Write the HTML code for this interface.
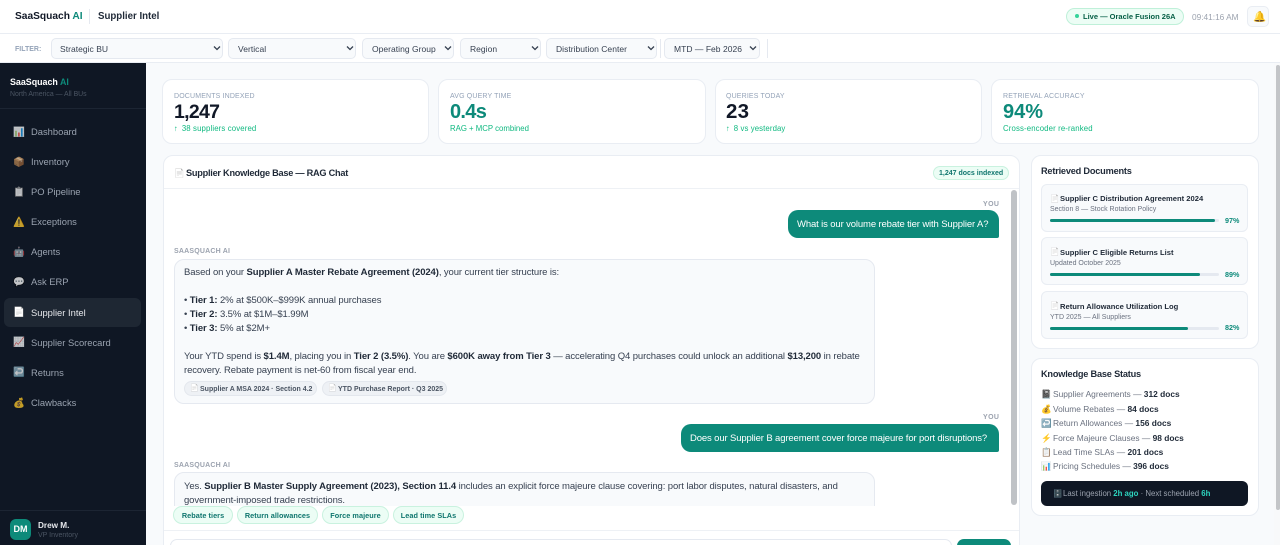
<!DOCTYPE html>
<html><head><meta charset="utf-8"><style>
*{box-sizing:border-box;margin:0;padding:0}
html,body{width:1280px;height:545px;overflow:hidden;background:#f8fafc}
body{position:relative;font-family:"Liberation Sans","Noto Sans CJK SC",sans-serif;color:#374151}
.b{position:absolute}
.t{position:absolute;height:0;line-height:0;white-space:nowrap}
b{font-weight:700;color:#1f2937}
.sel{position:absolute;top:38px;height:21px;background:#f8fafc;border:1px solid #e5e9f0;border-radius:5px}
.card{position:absolute;background:#fff;border:1px solid #e9edf3;border-radius:10px}
.st{font-size:8.5px;color:#374151;letter-spacing:.03px;top:48.5px}
.chev{position:absolute;top:45px;width:8px;height:6px}
.nav{font-size:9.4px;color:#9aa3b0;left:31px;margin-top:.4px}
.ic{position:absolute;height:0;line-height:0;font-size:11px;margin-top:1px}
.ni{font-size:9.5px;left:13px;opacity:.75}
.gr{filter:grayscale(1)}
.kl{font-size:7px;color:#94a3b8;letter-spacing:.15px;top:96.5px}
.kv{font-size:20px;font-weight:700;top:112px}
.ks{font-size:7.8px;color:#10b981;top:128.8px}
.m{font-size:9.5px;left:184px;letter-spacing:-.1px;color:#374151;margin-top:1.2px}
.who{font-size:7px;font-weight:700;color:#9ca3af;letter-spacing:.2px}
.chip{position:absolute;top:506px;height:18px;background:#ecfdf5;border:1px solid #c9f2df;border-radius:9px;font-size:7.3px;font-weight:700;color:#0f766e;line-height:17px;text-align:center;letter-spacing:.05px;white-space:nowrap}
.cite{position:absolute;top:381px;height:15px;background:#eef1f5;border:1px solid #e3e7ed;border-radius:8px}
.doc{position:absolute;left:1041px;width:207px;height:48px;background:#f8fafc;border:1px solid #e9edf3;border-radius:6px}
.dt{font-size:7.6px;font-weight:700;color:#1f2937;left:1060px;margin-top:1px}
.ds{font-size:7px;color:#6b7280;left:1050px;margin-top:1px}
.tr{position:absolute;left:1050px;width:169px;height:3px;background:#e5e9f0;border-radius:2px}
.fi{position:absolute;left:0;top:0;height:3px;background:#0d8a7a;border-radius:2px}
.pc{font-size:7.2px;font-weight:700;color:#0d8a7a;left:1225px}
.k{font-size:8.4px;color:#6b7280;left:1053px;margin-top:.5px}
.k b{color:#1f2937}
.kc{left:1041px;font-size:8.5px}
.h{font-size:9.2px;font-weight:700;color:#1f2937;letter-spacing:-.2px}
.ar{margin-right:1.5px}
</style></head><body>
<!-- top bar -->
<div class="b" style="left:0;top:0;width:1280px;height:34px;background:#fff;border-bottom:1px solid #e9edf3"></div>
<div class="t" style="left:15px;top:17px;font-size:10.2px;font-weight:700;color:#111827">SaaSquach <span style="color:#0d8a7a">AI</span></div>
<div class="b" style="left:89px;top:9px;width:1px;height:15px;background:#e5e9f0"></div>
<div class="t" style="left:98px;top:17px;font-size:9.7px;font-weight:700;color:#1f2937">Supplier Intel</div>
<div class="b" style="left:1066px;top:8px;width:118px;height:17px;background:#ecfdf5;border:1px solid #bff0d9;border-radius:9px"></div>
<div class="b" style="left:1075px;top:14px;width:4px;height:4px;border-radius:50%;background:#34d399"></div>
<div class="t" style="left:1083px;top:17px;font-size:7.5px;font-weight:700;color:#065f46">Live — Oracle Fusion 26A</div>
<div class="t" style="left:1192px;top:16.5px;font-size:8.3px;color:#9ca3af">09:41:16 AM</div>
<div class="b" style="left:1247px;top:6px;width:22px;height:21px;background:#f8fafc;border:1px solid #e9edf3;border-radius:5px"></div>
<div class="ic" style="left:1253px;top:15.5px;font-size:10.5px">🔔</div>
<!-- filter bar -->
<div class="b" style="left:0;top:34px;width:1280px;height:29px;background:#fff;border-bottom:1px solid #e9edf3"></div>
<div class="t" style="left:15px;top:50px;font-size:7px;font-weight:700;color:#94a3b8">FILTER:</div>
<div class="sel" style="left:51px;width:172px"></div><div class="t st" style="left:60px">Strategic BU</div>
<div class="sel" style="left:228px;width:128px"></div><div class="t st" style="left:238px">Vertical</div>
<div class="sel" style="left:362px;width:92px"></div><div class="t st" style="left:372px">Operating Group</div>
<div class="sel" style="left:460px;width:81px"></div><div class="t st" style="left:470px">Region</div>
<div class="sel" style="left:546px;width:111px"></div><div class="t st" style="left:556px">Distribution Center</div>
<div class="b" style="left:660px;top:39px;width:1px;height:19px;background:#e5e9f0"></div>
<div class="sel" style="left:664px;width:96px"></div><div class="t st" style="left:674px">MTD — Feb 2026</div>
<div class="b" style="left:767px;top:39px;width:1px;height:19px;background:#e5e9f0"></div>
<svg class="chev" style="left:213px" viewBox="0 0 8 6"><path d="M1 1.5 4 4.5 7 1.5" fill="none" stroke="#374151" stroke-width="1.3"/></svg>
<svg class="chev" style="left:346px" viewBox="0 0 8 6"><path d="M1 1.5 4 4.5 7 1.5" fill="none" stroke="#374151" stroke-width="1.3"/></svg>
<svg class="chev" style="left:444px" viewBox="0 0 8 6"><path d="M1 1.5 4 4.5 7 1.5" fill="none" stroke="#374151" stroke-width="1.3"/></svg>
<svg class="chev" style="left:531px" viewBox="0 0 8 6"><path d="M1 1.5 4 4.5 7 1.5" fill="none" stroke="#374151" stroke-width="1.3"/></svg>
<svg class="chev" style="left:647px" viewBox="0 0 8 6"><path d="M1 1.5 4 4.5 7 1.5" fill="none" stroke="#374151" stroke-width="1.3"/></svg>
<svg class="chev" style="left:749px" viewBox="0 0 8 6"><path d="M1 1.5 4 4.5 7 1.5" fill="none" stroke="#374151" stroke-width="1.3"/></svg>
<!-- sidebar -->
<div class="b" style="left:0;top:63px;width:146px;height:482px;background:#0f1724"></div>
<div class="t" style="left:10px;top:81.5px;font-size:8.9px;font-weight:700;color:#fff">SaaSquach <span style="color:#0d8a7a">AI</span></div>
<div class="t" style="left:10px;top:94.5px;font-size:6.9px;color:#4b5563">North America — All BUs</div>
<div class="b" style="left:0;top:108px;width:146px;height:1px;background:#1c2533"></div>
<div class="b" style="left:4px;top:298px;width:137px;height:29px;background:#1e2733;border-radius:6px"></div>
<div class="ic ni" style="top:131.5px">📊</div><div class="t nav" style="top:131.5px">Dashboard</div>
<div class="ic ni" style="top:161.5px">📦</div><div class="t nav" style="top:161.5px">Inventory</div>
<div class="ic ni gr" style="top:191.5px">📋</div><div class="t nav" style="top:191.5px">PO Pipeline</div>
<div class="ic ni" style="top:221.5px">⚠️</div><div class="t nav" style="top:221.8px">Exceptions</div>
<div class="ic ni" style="top:251.5px">🤖</div><div class="t nav" style="top:252px">Agents</div>
<div class="ic ni" style="top:281.5px">💬</div><div class="t nav" style="top:282px">Ask ERP</div>
<div class="ic ni gr" style="top:311.5px;opacity:1">📄</div><div class="t nav" style="top:312.3px;color:#e5e7eb">Supplier Intel</div>
<div class="ic ni" style="top:342px">📈</div><div class="t nav" style="top:342.5px">Supplier Scorecard</div>
<div class="ic ni" style="top:372px">↩️</div><div class="t nav" style="top:372.5px">Returns</div>
<div class="ic ni" style="top:402.5px">💰</div><div class="t nav" style="top:402.8px">Clawbacks</div>
<div class="b" style="left:0;top:510px;width:146px;height:1px;background:#1c2533"></div>
<div class="b" style="left:10px;top:519px;width:21px;height:21px;border-radius:6px;background:#0d8a7a;color:#fff;font-size:9px;font-weight:700;line-height:21px;text-align:center">DM</div>
<div class="t" style="left:38px;top:526px;font-size:8.2px;font-weight:700;color:#e5e7eb">Drew M.</div>
<div class="t" style="left:38px;top:535.5px;font-size:7px;color:#4b5563">VP Inventory</div>
<!-- KPI -->
<div class="card" style="left:162px;top:79px;width:267px;height:65px"></div>
<div class="card" style="left:438px;top:79px;width:268px;height:65px"></div>
<div class="card" style="left:715px;top:79px;width:267px;height:65px"></div>
<div class="card" style="left:991px;top:79px;width:268px;height:65px"></div>
<div class="t kl" style="left:174px">DOCUMENTS INDEXED</div><div class="t kv" style="left:174px;color:#111827;font-size:19.5px;letter-spacing:-.7px">1,247</div><div class="t ks" style="left:174px;letter-spacing:.13px"><span class="ar">↑</span> 38 suppliers covered</div>
<div class="t kl" style="left:450px">AVG QUERY TIME</div><div class="t kv" style="left:450px;color:#0d8a7a;letter-spacing:-.7px">0.4s</div><div class="t ks" style="left:450px">RAG + MCP combined</div>
<div class="t kl" style="left:726px">QUERIES TODAY</div><div class="t kv" style="left:726px;color:#111827;font-size:20.5px;letter-spacing:.2px">23</div><div class="t ks" style="left:726px;letter-spacing:.1px"><span class="ar">↑</span> 8 vs yesterday</div>
<div class="t kl" style="left:1003px">RETRIEVAL ACCURACY</div><div class="t kv" style="left:1003px;color:#0d8a7a">94%</div><div class="t ks" style="left:1003px;letter-spacing:.13px">Cross-encoder re-ranked</div>
<!-- chat card -->
<div class="card" style="left:163px;top:155px;width:857px;height:400px"></div>
<div class="b" style="left:164px;top:188px;width:855px;height:1px;background:#eef1f5"></div>
<div class="ic gr" style="left:174px;top:172px;font-size:8.5px">📄</div>
<div class="t h" style="left:186px;top:173px;letter-spacing:-.25px">Supplier Knowledge Base — RAG Chat</div>
<div class="b" style="left:933px;top:166px;width:76px;height:14px;background:#ecfdf5;border:1px solid #c9f2df;border-radius:7px"></div>
<div class="t" style="left:939px;top:173.5px;font-size:7px;font-weight:700;color:#0f766e">1,247 docs indexed</div>
<div class="b" style="left:1011px;top:190px;width:6px;height:315px;background:#bfc2c6;border-radius:3px"></div>
<div class="t who" style="left:983px;top:204.5px;letter-spacing:.4px">YOU</div>
<div class="b" style="left:788px;top:210px;width:211px;height:28px;background:#0d8a7a;border-radius:10px 10px 2px 10px"></div>
<div class="t" style="left:797px;top:225px;font-size:9.5px;color:#fff;letter-spacing:-.13px">What is our volume rebate tier with Supplier A?</div>
<div class="t who" style="left:174px;top:252px">SAASQUACH AI</div>
<div class="b" style="left:174px;top:259px;width:701px;height:145px;background:#f8fafc;border:1px solid #e5e9f0;border-radius:10px"></div>
<div class="t m" style="top:272px">Based on your <b>Supplier A Master Rebate Agreement (2024)</b>, your current tier structure is:</div>
<div class="t m" style="top:300px">• <b>Tier 1:</b> 2% at $500K–$999K annual purchases</div>
<div class="t m" style="top:314px">• <b>Tier 2:</b> 3.5% at $1M–$1.99M</div>
<div class="t m" style="top:328px">• <b>Tier 3:</b> 5% at $2M+</div>
<div class="t m" style="top:356px">Your YTD spend is <b>$1.4M</b>, placing you in <b>Tier 2 (3.5%)</b>. You are <b>$600K away from Tier 3</b> — accelerating Q4 purchases could unlock an additional <b>$13,200</b> in rebate</div>
<div class="t m" style="top:370px">recovery. Rebate payment is net-60 from fiscal year end.</div>
<div class="cite" style="left:184px;width:133px"></div>
<div class="cite" style="left:322px;width:125px"></div>
<div class="ic gr" style="left:190px;top:388px;font-size:7px">📄</div>
<div class="t" style="left:200px;top:389.5px;font-size:7px;font-weight:700;color:#4b5563">Supplier A MSA 2024 · Section 4.2</div>
<div class="ic gr" style="left:328px;top:388px;font-size:7px">📄</div>
<div class="t" style="left:338px;top:389.5px;font-size:7px;font-weight:700;color:#4b5563">YTD Purchase Report · Q3 2025</div>
<div class="t who" style="left:983px;top:418px;letter-spacing:.4px">YOU</div>
<div class="b" style="left:681px;top:424px;width:318px;height:28px;background:#0d8a7a;border-radius:10px 10px 2px 10px"></div>
<div class="t" style="left:690px;top:439px;font-size:9.5px;color:#fff;letter-spacing:-.13px">Does our Supplier B agreement cover force majeure for port disruptions?</div>
<div class="t who" style="left:174px;top:465.5px">SAASQUACH AI</div>
<div class="b" style="left:174px;top:472px;width:701px;height:60px;background:#f8fafc;border:1px solid #e5e9f0;border-radius:10px"></div>
<div class="t m" style="top:486px">Yes. <b>Supplier B Master Supply Agreement (2023), Section 11.4</b> includes an explicit force majeure clause covering: port labor disputes, natural disasters, and</div>
<div class="t m" style="top:500px">government-imposed trade restrictions.</div>
<!-- chips + input -->
<div class="b" style="left:164px;top:506px;width:855px;height:39px;background:#fff"></div>
<div class="b" style="left:164px;top:530px;width:855px;height:1px;background:#eef1f5"></div>
<div class="chip" style="left:173px;width:60px">Rebate tiers</div>
<div class="chip" style="left:237px;width:81px">Return allowances</div>
<div class="chip" style="left:322px;width:67px">Force majeure</div>
<div class="chip" style="left:393px;width:71px">Lead time SLAs</div>
<div class="b" style="left:170px;top:539px;width:782px;height:16px;background:#fff;border:1px solid #e5e9f0;border-radius:7px"></div>
<div class="b" style="left:957px;top:539px;width:54px;height:16px;background:#0d8a7a;border-radius:7px"></div>
<!-- right column -->
<div class="card" style="left:1031px;top:155px;width:228px;height:194px"></div>
<div class="t h" style="left:1041px;top:171px">Retrieved Documents</div>
<div class="doc" style="top:184px"></div><div class="doc" style="top:237px"></div><div class="doc" style="top:291px"></div>
<div class="ic gr" style="left:1050px;top:197.5px;font-size:7.5px">📄</div><div class="t dt" style="top:198px">Supplier C Distribution Agreement 2024</div>
<div class="t ds" style="top:208.5px">Section 8 — Stock Rotation Policy</div>
<div class="tr" style="top:219px"><div class="fi" style="width:165px"></div></div><div class="t pc" style="top:221px">97%</div>
<div class="ic gr" style="left:1050px;top:251px;font-size:7.5px">📄</div><div class="t dt" style="top:251.5px">Supplier C Eligible Returns List</div>
<div class="t ds" style="top:262.5px">Updated October 2025</div>
<div class="tr" style="top:273px"><div class="fi" style="width:150px"></div></div><div class="t pc" style="top:274.5px">89%</div>
<div class="ic gr" style="left:1050px;top:305px;font-size:7.5px">📄</div><div class="t dt" style="top:305.5px">Return Allowance Utilization Log</div>
<div class="t ds" style="top:316.5px">YTD 2025 — All Suppliers</div>
<div class="tr" style="top:327px"><div class="fi" style="width:138px"></div></div><div class="t pc" style="top:328px">82%</div>
<div class="card" style="left:1031px;top:358px;width:228px;height:158px"></div>
<div class="t h" style="left:1041px;top:373.5px">Knowledge Base Status</div>
<div class="ic kc" style="top:393px">📓</div><div class="t k" style="top:393.5px">Supplier Agreements — <b>312 docs</b></div>
<div class="ic kc" style="top:407.5px">💰</div><div class="t k" style="top:408px">Volume Rebates — <b>84 docs</b></div>
<div class="ic kc" style="top:422px">↩️</div><div class="t k" style="top:422.5px">Return Allowances — <b>156 docs</b></div>
<div class="ic kc" style="top:436.5px">⚡</div><div class="t k" style="top:437px">Force Majeure Clauses — <b>98 docs</b></div>
<div class="ic kc" style="top:450.5px;filter:saturate(.5)">📋</div><div class="t k" style="top:451px">Lead Time SLAs — <b>201 docs</b></div>
<div class="ic kc" style="top:465px">📊</div><div class="t k" style="top:465.5px">Pricing Schedules — <b>396 docs</b></div>
<div class="b" style="left:1041px;top:481px;width:207px;height:25px;background:#0f1724;border-radius:6px"></div>
<div class="ic" style="left:1053px;top:492.5px;font-size:7.5px">🗄️</div>
<div class="t" style="left:1063px;top:494px;font-size:7.8px;color:#9ca3af">Last ingestion <b style="color:#2dd4bf">2h ago</b> · Next scheduled <b style="color:#2dd4bf">6h</b></div>
<!-- page scrollbar -->
<div class="b" style="left:1274px;top:63px;width:6px;height:482px;background:#f8f9fa"></div>
<div class="b" style="left:1276px;top:65px;width:4px;height:445px;background:#c3c5c8;border-radius:2px"></div>
</body></html>
